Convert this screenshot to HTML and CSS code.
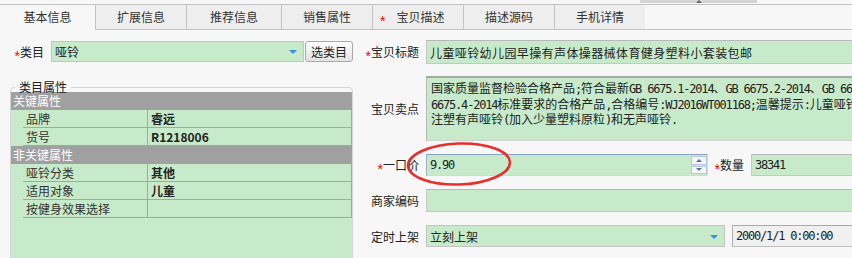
FILE: index.html
```html
<!DOCTYPE html>
<html lang="zh-CN">
<head>
    <meta charset="UTF-8">
    <title>宝贝编辑 - 基本信息</title>
    <link rel="stylesheet" href="styles.css">
</head>
<body>
    <div class="topstrip">
        <div class="tipbar"><span class="caret"></span></div>
    </div>

    <div class="tabs">
        <div class="tab active">基本信息</div>
        <div class="tab">扩展信息</div>
        <div class="tab wide">推荐信息</div>
        <div class="tab">销售属性</div>
        <div class="tab star"><span class="req">*</span><span class="tab-text">宝贝描述</span></div>
        <div class="tab">描述源码</div>
        <div class="tab last">手机详情</div>
    </div>

    <div class="main">
        <div class="left">
            <div class="catrow">
                <label class="lbl"><span class="req">*</span>类目</label>
                <div class="select cat">哑铃<span class="arrow"></span></div>
                <button type="button" class="btn">选类目</button>
            </div>

            <fieldset class="props">
                <legend>类目属性</legend>
                <div class="propbox">
                    <div class="group">关键属性</div>
                    <div class="prop"><span class="pk">品牌</span><span class="pv">睿远</span></div>
                    <div class="prop"><span class="pk">货号</span><span class="pv">R1218006</span></div>
                    <div class="group">非关键属性</div>
                    <div class="prop"><span class="pk">哑铃分类</span><span class="pv">其他</span></div>
                    <div class="prop"><span class="pk">适用对象</span><span class="pv">儿童</span></div>
                    <div class="prop"><span class="pk">按健身效果选择</span><span class="pv"></span></div>
                </div>
            </fieldset>
        </div>

        <div class="right">
            <div class="frow r-title">
                <label class="lbl"><span class="req">*</span>宝贝标题</label>
                <div class="input title">儿童哑铃幼儿园早操有声体操器械体育健身塑料小套装包邮</div>
            </div>

            <div class="frow r-sell">
                <label class="lbl">宝贝卖点</label>
                <div class="textarea">国家质量监督检验合格产品<span class="en">;</span>符合最新<span class="en">GB 6675.1-2014</span>、<span class="en">GB 6675.2-2014</span>、<span class="en">GB 6675.3-2014</span>、<span class="en">GB</span>
<span class="en">6675.4-2014</span>标准要求的合格产品<span class="en">,</span>合格编号<span class="en">:WJ2016WT001168;</span>温馨提示<span class="en">:</span>儿童哑铃分为
注塑有声哑铃<span class="en">(</span>加入少量塑料原粒<span class="en">)</span>和无声哑铃<span class="en">.</span></div>
            </div>

            <div class="frow r-price">
                <label class="lbl"><span class="req">*</span>一口价</label>
                <div class="input price">
                    <span class="en">9.90</span>
                    <span class="spin"><span class="sbtn"><i class="up"></i></span><span class="sbtn"><i class="down"></i></span></span>
                </div>
                <label class="lbl qty-lbl"><span class="req">*</span>数量</label>
                <div class="input qty"><span class="en">38341</span></div>
                <svg class="mark" width="130" height="54" viewBox="0 0 130 54">
                    <ellipse cx="56" cy="25" rx="51" ry="20.5" transform="rotate(-2 56 25)" fill="none" stroke="#e6302e" stroke-width="2.6"/>
                </svg>
            </div>

            <div class="frow r-code">
                <label class="lbl">商家编码</label>
                <div class="input code"></div>
            </div>

            <div class="frow r-sched">
                <label class="lbl">定时上架</label>
                <div class="select sched">立刻上架<span class="arrow"></span></div>
                <div class="input date"><span class="en">2000/1/1 0:00:00</span></div>
            </div>
        </div>
    </div>
</body>
</html>
```

FILE: styles.css
```css
* {
    box-sizing: border-box;
}
html, body {
    margin: 0;
    overflow: hidden;
}
body {
    width: 1100px;
    background: #f7f7f7;
    font-family: "Noto Sans CJK SC", sans-serif;
    font-size: 12px;
    color: #222;
}
.en {
    font-family: "DejaVu Sans Mono", monospace;
    letter-spacing: -1.2px;
}
.req {
    color: #f00;
    font-family: "Liberation Sans", sans-serif;
    font-size: 14px;
    line-height: 10px;
    vertical-align: -4px;
}

/* strip above the tabs */
.topstrip {
    height: 4px;
    padding-left: 640px;
}
.tipbar {
    width: 117px;
    height: 3px;
    background: #d4d4d4;
    display: flex;
    justify-content: center;
    align-items: flex-end;
}
.caret {
    border-left: 3px solid transparent;
    border-right: 3px solid transparent;
    border-bottom: 3px solid #666;
    margin-left: 1px;
}

/* tabs */
.tabs {
    display: flex;
    height: 26px;
    border-top: 1px solid #c2c2c2;
    border-bottom: 1px solid #c2c2c2;
}
.tab {
    width: 91px;
    height: 24px;
    line-height: 24px;
    text-align: center;
    background: #eeeeee;
    border-left: 1px solid #c2c2c2;
    color: #333;
}
.tab.active {
    width: 95px;
    height: 25px;
    border-left: none;
    background: #f7f7f7;
    margin-bottom: -1px;
}
.tab.wide {
    width: 95px;
}
.tab.star {
    text-align: left;
    padding-left: 7px;
}
.tab.star .tab-text {
    margin-left: 11px;
}

/* layout */
.main {
    display: flex;
    padding-top: 10px;
}
.left {
    width: 355px;
    flex: none;
    padding-top: 1px;
}
.right {
    width: 700px;
    flex: none;
}
.lbl {
    flex: none;
    text-align: right;
    padding-right: 7px;
    color: #222;
}

/* category row */
.catrow {
    display: flex;
    height: 21px;
}
.catrow .lbl {
    width: 51px;
    line-height: 21px;
}
.select {
    display: flex;
    align-items: center;
    justify-content: space-between;
    background: #c7ebca;
    border: 1px solid #c4c4c4;
    padding: 0 6px 0 3px;
}
.cat {
    width: 253px;
}
.arrow {
    border-left: 4px solid transparent;
    border-right: 4px solid transparent;
    border-top: 4px solid #3a8ee6;
    margin-top: 1px;
}
.btn {
    width: 48px;
    height: 21px;
    margin-left: 1px;
    padding: 0;
    font: inherit;
    color: #222;
    border: 1px solid #a9a9a9;
    border-radius: 3px;
    background: linear-gradient(#fefefe, #e2e2e2);
}

/* category properties */
.props {
    margin: 19px 0 0 10px;
    width: 343px;
    padding: 0;
    border: 1px solid #d4d4d4;
    border-radius: 4px;
    min-width: 0;
}
.props legend {
    margin-left: 4px;
    padding: 0 4px;
    line-height: 12px;
    color: #222;
}
.propbox {
    height: 200px;
    margin-top: -1px;
    background: #c7ebca;
}
.group {
    height: 18px;
    line-height: 18px;
    padding-left: 2px;
    background: #a0a0a0;
    color: #fff;
}
.prop {
    display: flex;
    height: 18px;
    line-height: 17px;
    margin-left: 12px;
    border-bottom: 1px solid #a6a6a6;
    border-right: 1px solid #a6a6a6;
}
.pk {
    width: 124px;
    padding-left: 3px;
    color: #333;
}
.pv {
    flex: 1;
    padding-left: 3px;
    border-left: 1px solid #a6a6a6;
    font-weight: bold;
}

/* right form */
.frow {
    display: flex;
    align-items: center;
}
.frow > .lbl {
    width: 71px;
}
.input {
    background: #c7ebca;
    border: 1px solid #c6c6c6;
    border-top-color: #b8b8b8;
    padding-left: 3px;
    display: flex;
    align-items: center;
}
.r-title {
    height: 24px;
    margin-bottom: 12px;
}
.title {
    flex: 1;
    height: 24px;
    letter-spacing: 0.4px;
}
.r-sell {
    height: 65px;
    margin-bottom: 13px;
}
.textarea {
    flex: 1;
    height: 65px;
    background: #c7ebca;
    border: 1px solid #d0d0d0;
    border-top: 2px solid #a8a8a8;
    border-left-color: #b8b8b8;
    padding: 3px 4px;
    line-height: 14.5px;
    white-space: pre;
    overflow: hidden;
}
.r-price {
    height: 22px;
    margin-bottom: 13px;
    position: relative;
}
.price {
    width: 282px;
    height: 22px;
    justify-content: space-between;
    padding-right: 0;
    border-color: #cdd8e6;
    border-top-color: #86a4c8;
    border-left-color: #9ab2d0;
}
.spin {
    width: 16px;
    height: 20px;
    display: flex;
    flex-direction: column;
    gap: 1px;
    padding: 1px 0;
}
.sbtn {
    flex: 1;
    display: flex;
    align-items: center;
    justify-content: center;
    background: #f3f5f9;
    border: 1px solid #b7c6da;
}
.up {
    border-left: 3px solid transparent;
    border-right: 3px solid transparent;
    border-bottom: 3px solid #5a74a0;
}
.down {
    border-left: 3px solid transparent;
    border-right: 3px solid transparent;
    border-top: 3px solid #5a74a0;
}
.frow > .qty-lbl {
    width: 43px;
}
.qty {
    flex: 1;
    height: 22px;
}
.mark {
    position: absolute;
    left: 48px;
    top: -15px;
    pointer-events: none;
}
.r-code {
    height: 23px;
    margin-bottom: 13px;
}
.code {
    flex: 1;
    height: 23px;
}
.r-sched {
    height: 22px;
}
.sched {
    width: 299px;
    height: 22px;
    margin-right: 7px;
}
.date {
    flex: 1;
    height: 22px;
    background: #f0f0f0;
    border-color: #c0c0c0;
    border-top-color: #a8a8a8;
    border-left-color: #b0b0b0;
}
```
